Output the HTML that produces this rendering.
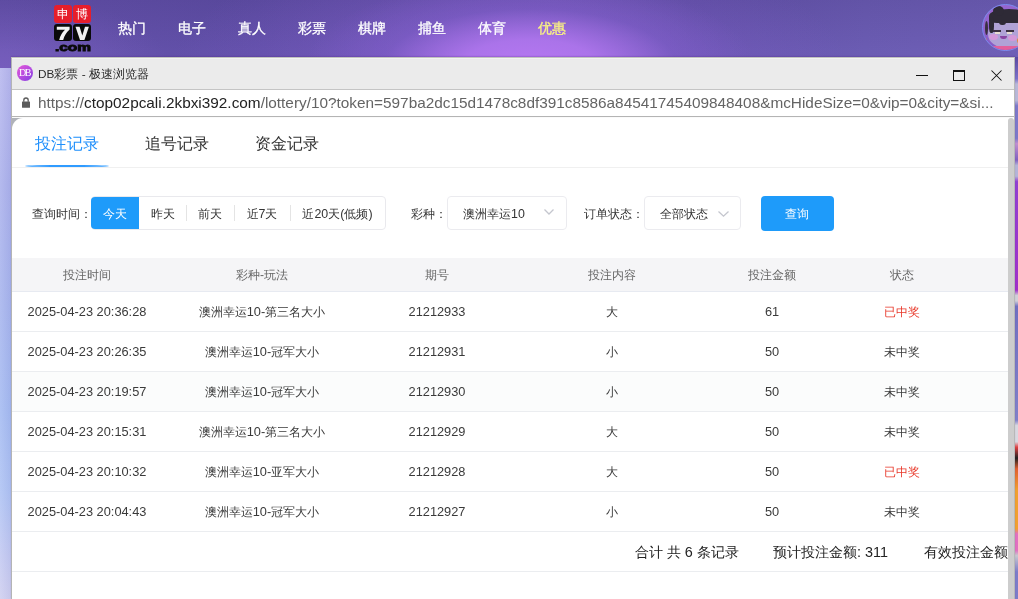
<!DOCTYPE html>
<html><head><meta charset="utf-8"><style>
*{margin:0;padding:0;box-sizing:border-box}
html,body{width:1018px;height:599px;overflow:hidden;font-family:"Liberation Sans",sans-serif;background:#6656ad}
.abs{position:absolute}
#hdr{position:absolute;left:0;top:0;width:1018px;height:68px;
 background:
  radial-gradient(ellipse 225px 88px at 530px 66px, rgba(182,120,242,1) 0%, rgba(176,118,238,.9) 30%, rgba(135,96,210,.4) 65%, rgba(110,85,190,0) 100%),
  radial-gradient(ellipse 340px 130px at 510px 70px, rgba(140,100,215,.55) 0%, rgba(120,90,200,0) 100%),
  linear-gradient(180deg,rgba(20,10,60,.10) 0%,rgba(20,10,60,0) 75%),
  radial-gradient(ellipse 170px 75px at 0px 68px,rgba(135,105,205,.5) 0%,rgba(135,105,205,0) 100%),
  linear-gradient(90deg,#6552ac 0%,#604fa7 25%,#6451aa 40%,#6a55b0 55%,#6553ac 68%,#6b5cb3 85%,#6e5fb6 100%);}
#leftstrip{position:absolute;left:0;top:68px;width:11px;height:531px;background:linear-gradient(90deg,rgba(255,255,255,.10) 0%,rgba(50,50,140,.06) 100%),linear-gradient(180deg,#b8b8ee 0%,#acb2ec 22%,#a8b6ee 45%,#a6bcf2 65%,#b0c4f4 80%,#c4caf2 92%,#d0d0f0 100%)}
#rightstrip{position:absolute;left:1015px;top:57px;width:3px;height:542px;background:linear-gradient(180deg,#5a4aa0 0%,#7a70c8 4%,#b8b8d8 5%,#b8b8d8 8%,#7c78c8 9%,#7c78c8 15%,#c090d0 16%,#8060c0 19%,#b4b4d8 20%,#b4b4d8 22%,#9040d0 23%,#a030c8 43%,#d0d0d8 44%,#d0d0d8 45%,#7070c0 46%,#8080c8 67%,#d8d8e0 68%,#d8d8e0 71%,#e04040 72%,#202020 74%,#e06030 76%,#f0a030 80%,#f0a030 87%,#e070c0 88%,#e070c0 91%,#c8c8d0 92%,#7c7cc8 95%,#7c7cc8 100%)}
.nav{position:absolute;top:20px;font-size:14px;font-weight:500;-webkit-text-stroke:0.3px currentColor;color:#fff;white-space:nowrap}
#win{position:absolute;left:11px;top:57px;width:1004px;height:542px;background:#ebebeb;border-left:1px solid #b4b4b4;border-right:1px solid #b8b8b8;border-top:1px solid #c2c4be;box-shadow:inset 0 1px 0 #f3f3f3,0 -1px 1px rgba(70,20,120,.18)}
#title{position:absolute;left:26px;top:8px;font-size:12px;color:#2a2a2a;white-space:nowrap}
#title .n{font-size:11.8px}
#urlbar{position:absolute;left:0;top:31px;width:1002px;height:28px;background:#fff;border-top:1px solid #c4c4c4;border-bottom:1px solid #b4b4b4}
#url{position:absolute;left:26px;top:4px;font-size:15.35px;color:#646464;white-space:nowrap}
#url b{font-weight:normal;color:#222}
#content{position:absolute;left:0;top:59px;width:1002px;height:483px;background:#afb2b9;border-top:1px solid #fafafa;overflow:hidden}
#panel{position:absolute;left:0;top:0;width:996px;height:482px;background:#fff;border-top-left-radius:11px;overflow:hidden}
#sb{position:absolute;left:996px;top:0;width:6px;height:482px;background:#cdcdcd;border-radius:3px 3px 0 0}
.tab{position:absolute;top:16px;font-size:16px;color:#333;white-space:nowrap}
.seg{position:absolute;top:79px;height:32px;font-size:12px;color:#333;line-height:34px;text-align:center;white-space:nowrap}
.seg .n{font-size:12.4px}
.lbl{position:absolute;font-size:12px;color:#333;white-space:nowrap}
.lbl .n{font-size:12.4px}
.th{position:absolute;top:149px;font-size:12px;color:#666;text-align:center;white-space:nowrap}
.td{position:absolute;font-size:12px;color:#3a3a3a;text-align:center;white-space:nowrap}
.td .n{font-size:12.8px}
.ft{position:absolute;top:426px;font-size:14px;color:#222;white-space:nowrap}
.ft .n{font-size:14.4px}
.hl{position:absolute;left:0;width:996px;height:1px;background:#ebedf0}
body *{will-change:transform}
</style></head><body>
<div id="hdr"></div><div id="leftstrip"></div><div id="rightstrip"></div>
<div class="abs" style="left:54px;top:5px;width:18px;height:18px;background:#e61e2b;border-radius:3px;color:#fff;font-size:12px;line-height:18px;text-align:center">申</div>
<div class="abs" style="left:73px;top:5px;width:18px;height:18px;background:#e61e2b;border-radius:3px;color:#fff;font-size:12px;line-height:18px;text-align:center">博</div>
<div class="abs" style="left:54px;top:24px;width:18px;height:17px;background:#0a0a0a;border-radius:3px"></div>
<div class="abs" style="left:73px;top:24px;width:18px;height:17px;background:#0a0a0a;border-radius:3px"></div>
<svg class="abs" style="left:50px;top:22px" width="46" height="32" viewBox="0 0 46 32">
 <path d="M6.8 4.7H19.6V7.6Q14.6 12.2 13.2 17.9H9.2Q10.5 12 15 7.8H6.8Z" fill="#f2f2f2"/>
 <path d="M25.5 4.7H29.6L32.3 13.6L35 4.7H38.9L34.4 17.9H30Z" fill="#f2f2f2"/>
 <text x="23" y="28.5" text-anchor="middle" font-family="Liberation Sans" font-weight="bold" font-size="11.5" fill="#0a0a0a" stroke="#0a0a0a" stroke-width="0.9" textLength="36" lengthAdjust="spacingAndGlyphs">.com</text>
</svg>
<div class="nav" style="left:118px">热门</div>
<div class="nav" style="left:178px">电子</div>
<div class="nav" style="left:238px">真人</div>
<div class="nav" style="left:298px">彩票</div>
<div class="nav" style="left:358px">棋牌</div>
<div class="nav" style="left:418px">捕鱼</div>
<div class="nav" style="left:478px">体育</div>
<div class="nav" style="left:538px;color:#faf282">优惠</div>
<div class="abs" style="left:982px;top:4px;width:47px;height:47px;border-radius:50%;background:linear-gradient(160deg,#9a68d2 0%,#7e58c0 100%);border:1px solid #7c8cf0;overflow:hidden">
  <div class="abs" style="left:5px;top:13px;width:40px;height:30px;border-radius:50% 50% 46% 46%;background:#b0a2d6"></div>
  <div class="abs" style="left:6px;top:4px;width:40px;height:14px;border-radius:50% 50% 20% 20%;background:#2e2a36"></div>
  <div class="abs" style="left:10px;top:1px;width:11px;height:10px;border-radius:50%;background:#2e2a36"></div>
  <div class="abs" style="left:6px;top:12px;width:5px;height:16px;border-radius:40%;background:#2e2a36"></div>
  <div class="abs" style="left:36px;top:12px;width:9px;height:16px;border-radius:40%;background:#2e2a36"></div>
  <div class="abs" style="left:16px;top:14px;width:7px;height:6px;border-radius:0 0 3px 3px;background:#2e2a36"></div>
  <div class="abs" style="left:2px;top:16px;width:3px;height:14px;border-radius:50%;background:#3a3040"></div>
  <div class="abs" style="left:10px;top:25px;width:8px;height:2px;background:#3a3040"></div>
  <div class="abs" style="left:23px;top:25px;width:8px;height:2px;background:#3a3040"></div>
  <div class="abs" style="left:12px;top:27px;width:5px;height:2px;background:#e8dcd0"></div>
  <div class="abs" style="left:24px;top:27px;width:5px;height:2px;background:#e8dcd0"></div>
  <div class="abs" style="left:6px;top:29px;width:9px;height:6px;border-radius:50%;background:#d498d8"></div>
  <div class="abs" style="left:25px;top:30px;width:9px;height:6px;border-radius:50%;background:#d498d8"></div>
  <div class="abs" style="left:17px;top:31px;width:7px;height:3px;border-radius:0 0 4px 4px;background:#8a44a2"></div>
  <div class="abs" style="left:34px;top:33px;width:3px;height:5px;border-radius:50%;background:#e08a3a"></div>
  <div class="abs" style="left:1px;top:33px;width:3px;height:5px;border-radius:50%;background:#e08a3a"></div>
  <div class="abs" style="left:6px;top:41px;width:40px;height:8px;background:#e2609c"></div>
</div>
<div id="win">
<div class="abs" style="left:5px;top:7px;width:16px;height:16px;border-radius:50%;background:linear-gradient(135deg,#e45ad6 0%,#b84ae0 50%,#8040e0 100%)"></div>
<div class="abs" style="left:5px;top:7px;width:16px;height:16px;color:#fff;font-family:'Liberation Serif',serif;font-size:10px;line-height:16px;text-align:center;letter-spacing:-1.5px;text-indent:-1px">DB</div>
<div id="title"><span class="n">DB</span>彩票 <span class="n">-</span> 极速浏览器</div>
<div class="abs" style="left:904px;top:17px;width:12px;height:1px;background:#111"></div>
<div class="abs" style="left:941px;top:12px;width:12px;height:11px;border:1px solid #111;border-top-width:2px"></div>
<svg class="abs" style="left:979px;top:12px" width="11" height="11" viewBox="0 0 11 11"><path d="M0.5 0.5L10.5 10.5M10.5 0.5L0.5 10.5" stroke="#111" stroke-width="1.05" fill="none"/></svg>
<div id="urlbar">
<svg class="abs" style="left:10px;top:7px" width="9" height="12" viewBox="0 0 9 12"><path d="M1.8 4.8V3.2A2.2 2.2 0 0 1 6.2 3.2V4.8" stroke="#5c5c5c" stroke-width="1.3" fill="none"/><rect x="0" y="4.4" width="8" height="6.3" rx="0.5" fill="#5c5c5c"/></svg>
<div id="url">https://<b>ctop02pcali.2kbxi392.com</b>/lottery/10?token=597ba2dc15d1478c8df391c8586a84541745409848408&amp;mcHideSize=0&amp;vip=0&amp;city=&amp;si...</div>
</div>
<div id="content"><div id="panel">
<div class="tab" style="left:23px;color:#1f8ffb">投注记录</div>
<div class="tab" style="left:133px">追号记录</div>
<div class="tab" style="left:243px">资金记录</div>
<div class="abs" style="left:13px;top:47px;width:84px;height:2px;background:#2f9bff;border-radius:50%"></div>
<div class="hl" style="top:49px;background:#f0f0f0"></div>
<div class="lbl" style="left:20px;top:88px">查询时间：</div>
<div class="abs" style="left:79px;top:78px;width:295px;height:34px;border:1px solid #e9e9ed;border-radius:4px"></div>
<div class="seg" style="left:79px;width:48px;height:32px;background:#1e9bfa;color:#fff;border-radius:4px 0 0 4px">今天</div>
<div class="seg" style="left:127px;width:47px">昨天</div>
<div class="seg" style="left:174px;width:48px">前天</div>
<div class="seg" style="left:222px;width:56px">近<span class="n">7</span>天</div>
<div class="seg" style="left:278px;width:95px">近<span class="n">20</span>天<span class="n">(</span>低频<span class="n">)</span></div>
<div class="abs" style="left:174px;top:87px;width:1px;height:16px;background:#e4e4e4"></div>
<div class="abs" style="left:222px;top:87px;width:1px;height:16px;background:#e4e4e4"></div>
<div class="abs" style="left:278px;top:87px;width:1px;height:16px;background:#e4e4e4"></div>
<div class="lbl" style="left:399px;top:88px">彩种：</div>
<div class="abs" style="left:435px;top:78px;width:120px;height:34px;border:1px solid #ebebef;border-radius:4px"></div>
<div class="lbl" style="left:451px;top:88px">澳洲幸运<span class="n">10</span></div>
<svg class="abs" style="left:532px;top:91px" width="10" height="6" viewBox="0 0 10 6"><path d="M0.5 0.5L5 5L9.5 0.5" stroke="#c4c6ce" stroke-width="1.3" fill="none"/></svg>
<div class="lbl" style="left:572px;top:88px">订单状态：</div>
<div class="abs" style="left:632px;top:78px;width:97px;height:34px;border:1px solid #ebebef;border-radius:4px"></div>
<div class="lbl" style="left:648px;top:88px">全部状态</div>
<svg class="abs" style="left:706px;top:93px" width="11" height="6" viewBox="0 0 11 6"><path d="M0.5 0.5L5.5 5.2L10.5 0.5" stroke="#c4c6ce" stroke-width="1.3" fill="none"/></svg>
<div class="abs" style="left:749px;top:78px;width:73px;height:35px;background:#1e9bfa;border-radius:4px;color:#fff;font-size:12px;font-weight:500;line-height:37px;text-align:center;text-indent:-2px">查询</div>
<div class="abs" style="left:0;top:140px;width:996px;height:33px;background:#f5f5f7"></div>
<div class="hl" style="top:173px;background:#e7eaf1"></div>
<div class="th" style="left:0px;width:150px">投注时间</div>
<div class="th" style="left:150px;width:200px">彩种-玩法</div>
<div class="th" style="left:350px;width:150px">期号</div>
<div class="th" style="left:500px;width:200px">投注内容</div>
<div class="th" style="left:700px;width:120px">投注金额</div>
<div class="th" style="left:820px;width:140px">状态</div>
<div class="td" style="left:0px;top:186px;width:150px"><span class="n">2025-04-23 20:36:28</span></div>
<div class="td" style="left:150px;top:186px;width:200px">澳洲幸运<span class="n">10-</span>第三名大小</div>
<div class="td" style="left:350px;top:186px;width:150px"><span class="n">21212933</span></div>
<div class="td" style="left:500px;top:186px;width:200px">大</div>
<div class="td" style="left:700px;top:186px;width:120px"><span class="n">61</span></div>
<div class="td" style="left:820px;top:186px;width:140px;color:#e8392b">已中奖</div>
<div class="hl" style="top:213px"></div>
<div class="td" style="left:0px;top:226px;width:150px"><span class="n">2025-04-23 20:26:35</span></div>
<div class="td" style="left:150px;top:226px;width:200px">澳洲幸运<span class="n">10-</span>冠军大小</div>
<div class="td" style="left:350px;top:226px;width:150px"><span class="n">21212931</span></div>
<div class="td" style="left:500px;top:226px;width:200px">小</div>
<div class="td" style="left:700px;top:226px;width:120px"><span class="n">50</span></div>
<div class="td" style="left:820px;top:226px;width:140px">未中奖</div>
<div class="hl" style="top:253px"></div>
<div class="abs" style="left:0;top:254px;width:996px;height:39px;background:#fbfcfc"></div>
<div class="td" style="left:0px;top:266px;width:150px"><span class="n">2025-04-23 20:19:57</span></div>
<div class="td" style="left:150px;top:266px;width:200px">澳洲幸运<span class="n">10-</span>冠军大小</div>
<div class="td" style="left:350px;top:266px;width:150px"><span class="n">21212930</span></div>
<div class="td" style="left:500px;top:266px;width:200px">小</div>
<div class="td" style="left:700px;top:266px;width:120px"><span class="n">50</span></div>
<div class="td" style="left:820px;top:266px;width:140px">未中奖</div>
<div class="hl" style="top:293px"></div>
<div class="td" style="left:0px;top:306px;width:150px"><span class="n">2025-04-23 20:15:31</span></div>
<div class="td" style="left:150px;top:306px;width:200px">澳洲幸运<span class="n">10-</span>第三名大小</div>
<div class="td" style="left:350px;top:306px;width:150px"><span class="n">21212929</span></div>
<div class="td" style="left:500px;top:306px;width:200px">大</div>
<div class="td" style="left:700px;top:306px;width:120px"><span class="n">50</span></div>
<div class="td" style="left:820px;top:306px;width:140px">未中奖</div>
<div class="hl" style="top:333px"></div>
<div class="td" style="left:0px;top:346px;width:150px"><span class="n">2025-04-23 20:10:32</span></div>
<div class="td" style="left:150px;top:346px;width:200px">澳洲幸运<span class="n">10-</span>亚军大小</div>
<div class="td" style="left:350px;top:346px;width:150px"><span class="n">21212928</span></div>
<div class="td" style="left:500px;top:346px;width:200px">大</div>
<div class="td" style="left:700px;top:346px;width:120px"><span class="n">50</span></div>
<div class="td" style="left:820px;top:346px;width:140px;color:#e8392b">已中奖</div>
<div class="hl" style="top:373px"></div>
<div class="td" style="left:0px;top:386px;width:150px"><span class="n">2025-04-23 20:04:43</span></div>
<div class="td" style="left:150px;top:386px;width:200px">澳洲幸运<span class="n">10-</span>冠军大小</div>
<div class="td" style="left:350px;top:386px;width:150px"><span class="n">21212927</span></div>
<div class="td" style="left:500px;top:386px;width:200px">小</div>
<div class="td" style="left:700px;top:386px;width:120px"><span class="n">50</span></div>
<div class="td" style="left:820px;top:386px;width:140px">未中奖</div>
<div class="hl" style="top:413px"></div>
<div class="ft" style="left:623px">合计 共 <span class="n">6</span> 条记录</div>
<div class="ft" style="left:761px">预计投注金额<span class="n">: 311</span></div>
<div class="ft" style="left:912px">有效投注金额<span class="n">: 311</span></div>
<div class="hl" style="top:453px"></div>
</div><div class="abs" style="left:996px;top:0;width:6px;height:482px;background:#fff"></div><div id="sb"></div></div>
</div>
</body></html>
